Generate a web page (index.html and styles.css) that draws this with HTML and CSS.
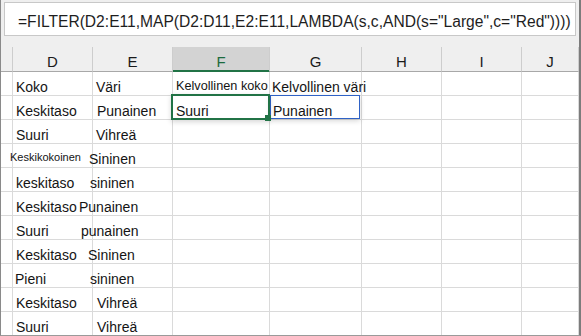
FILE: index.html
```html
<!DOCTYPE html>
<html lang="fi">
<head>
<meta charset="utf-8">
<title>FILTER</title>
<link rel="stylesheet" href="styles.css">
</head>
<body>
<div class="frame">
  <div class="formula-bar">
    <div class="formula-box">=FILTER(D2:E11,MAP(D2:D11,E2:E11,LAMBDA(s,c,AND(s="Large",c="Red"))))</div>
  </div>
  <div class="sheet">
    <div class="hd"></div><div class="hd">D</div><div class="hd">E</div><div class="hd hd-active">F</div><div class="hd">G</div><div class="hd">H</div><div class="hd">I</div><div class="hd">J</div>

    <div class="c"></div><div class="c"><span class="t m3">Koko</span></div><div class="c"><span class="t m3">Väri</span></div><div class="c"><span class="t m3 sm12">Kelvollinen koko</span></div><div class="c"><span class="t m2">Kelvollinen väri</span></div><div class="c"></div><div class="c"></div><div class="c"></div>

    <div class="c"></div><div class="c"><span class="t m3">Keskitaso</span></div><div class="c"><span class="t m4">Punainen</span></div><div class="c sel"><span class="t m3">Suuri</span></div><div class="c spill"><span class="t m3">Punainen</span></div><div class="c"></div><div class="c"></div><div class="c"></div>

    <div class="c"></div><div class="c"><span class="t m3">Suuri</span></div><div class="c"><span class="t m3">Vihreä</span></div><div class="c"></div><div class="c"></div><div class="c"></div><div class="c"></div><div class="c"></div>

    <div class="c"></div><div class="c"><span class="t n3 sm11">Keskikokoinen</span></div><div class="c"><span class="t n4">Sininen</span></div><div class="c"></div><div class="c"></div><div class="c"></div><div class="c"></div><div class="c"></div>

    <div class="c"></div><div class="c"><span class="t m3">keskitaso</span></div><div class="c"><span class="t n3">sininen</span></div><div class="c"></div><div class="c"></div><div class="c"></div><div class="c"></div><div class="c"></div>

    <div class="c"></div><div class="c"><span class="t m3">Keskitaso</span></div><div class="c"><span class="t n14">Punainen</span></div><div class="c"></div><div class="c"></div><div class="c"></div><div class="c"></div><div class="c"></div>

    <div class="c"></div><div class="c"><span class="t m3">Suuri</span></div><div class="c"><span class="t n12">punainen</span></div><div class="c"></div><div class="c"></div><div class="c"></div><div class="c"></div><div class="c"></div>

    <div class="c"></div><div class="c"><span class="t m3">Keskitaso</span></div><div class="c"><span class="t n5">Sininen</span></div><div class="c"></div><div class="c"></div><div class="c"></div><div class="c"></div><div class="c"></div>

    <div class="c"></div><div class="c"><span class="t m2">Pieni</span></div><div class="c"><span class="t n3">sininen</span></div><div class="c"></div><div class="c"></div><div class="c"></div><div class="c"></div><div class="c"></div>

    <div class="c"></div><div class="c"><span class="t m3">Keskitaso</span></div><div class="c"><span class="t m4">Vihreä</span></div><div class="c"></div><div class="c"></div><div class="c"></div><div class="c"></div><div class="c"></div>

    <div class="c"></div><div class="c"><span class="t m3">Suuri</span></div><div class="c"><span class="t m4">Vihreä</span></div><div class="c"></div><div class="c"></div><div class="c"></div><div class="c"></div><div class="c"></div>
  </div>
</div>
</body>
</html>
```

FILE: styles.css
```css
html, body {
  margin: 0;
  padding: 0;
  background: #ffffff;
}

.frame {
  width: 581px;
  height: 336px;
  box-sizing: border-box;
  border-left: 1px solid #8a8a8a;
  border-right: 2px solid #7c7c7c;
  border-bottom: 1px solid #9a9a9a;
  background: #efefef;
  overflow: hidden;
  display: flex;
  flex-direction: column;
}

.formula-bar {
  height: 47px;
  flex: none;
  box-sizing: border-box;
  padding: 2px 3px 0 3px;
}

.formula-box {
  height: 34px;
  box-sizing: border-box;
  border: 1px solid #c8c8c8;
  background: #ffffff;
  padding: 10px 0 0 13px;
  font-family: "Liberation Sans", Arial, sans-serif;
  font-size: 15.6px;
  line-height: 18px;
  color: #1e1e1e;
  white-space: nowrap;
  overflow: hidden;
}

.sheet {
  display: grid;
  grid-template-columns: 12px 80px 80px 97px 92px 80px 80px 57px;
  grid-template-rows: 25px;
  grid-auto-rows: 24px;
  background: #ffffff;
  font-family: "Liberation Sans", Arial, sans-serif;
  font-size: 14px;
  color: #141414;
}

.hd {
  box-sizing: border-box;
  background: #efefef;
  border-right: 1px solid #cdcdcd;
  border-bottom: 1px solid #a8a8a8;
  display: flex;
  align-items: flex-end;
  justify-content: center;
  font-size: 15px;
  line-height: 16px;
  padding-bottom: 1px;
  color: #1a1a1a;
}

.hd-active {
  background: #d3d3d3;
  color: #1c6b3e;
  border-bottom-color: #217346;
  box-shadow: inset 0 -1px 0 #217346;
}

.c {
  box-sizing: border-box;
  border-right: 1px solid #dadada;
  border-bottom: 1px solid #dadada;
  display: flex;
  align-items: flex-end;
  line-height: 16px;
  white-space: nowrap;
  min-width: 0;
}

.t {
  display: block;
  white-space: nowrap;
}

.m2 { margin-left: 2px; }
.m3 { margin-left: 3px; }
.m4 { margin-left: 4px; }
.n3 { margin-left: -3px; }
.n4 { margin-left: -4px; }
.n5 { margin-left: -5px; }
.n12 { margin-left: -12px; }
.n14 { margin-left: -14px; }

.sm11 {
  font-size: 11px;
  padding-bottom: 2px;
}

.sm12 {
  font-size: 12.7px;
  padding-bottom: 1px;
}

.sel {
  position: relative;
}

.sel::after {
  content: "";
  position: absolute;
  left: -2px;
  top: -2px;
  right: -1px;
  bottom: -1px;
  border: 2px solid #217346;
  box-shadow: 0 2px 5px rgba(0, 0, 0, 0.16);
  z-index: 3;
}

.sel::before {
  content: "";
  position: absolute;
  right: -2px;
  bottom: -2px;
  width: 6px;
  height: 6px;
  background: #217346;
  z-index: 4;
}

.spill {
  position: relative;
}

.spill::after {
  content: "";
  position: absolute;
  left: 0;
  top: -1px;
  right: 1px;
  bottom: 0;
  border: 1px solid #2f62c6;
  box-shadow: 0 2px 5px rgba(0, 0, 0, 0.16);
  z-index: 1;
}
```
